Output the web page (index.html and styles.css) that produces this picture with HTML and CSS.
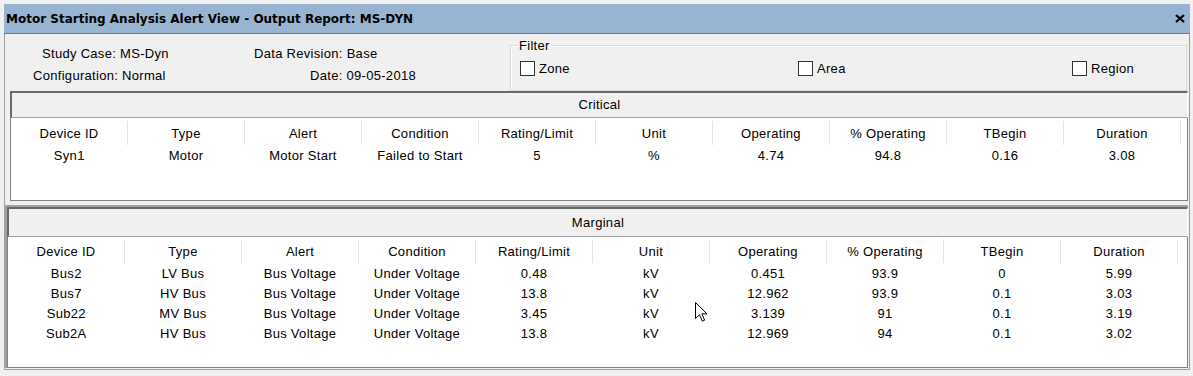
FILE: index.html
```html
<!DOCTYPE html>
<html lang="en">

<head>
  <meta charset="UTF-8">
  <title>Motor Starting Analysis Alert View</title>
  <link rel="stylesheet" href="styles.css">
</head>

<body>
  <div class="window">
    <div class="titlebar">
      <span class="title">Motor Starting Analysis Alert View - Output Report: MS-DYN</span>
      <svg class="close" width="10" height="9" viewBox="0 0 10 9">
        <path d="M1 1 L9 8 M9 1 L1 8" stroke="#000" stroke-width="2.2" fill="none" />
      </svg>
    </div>

    <div class="content">
      <div class="info">
        <div class="meta">
          <div class="metaRow">
            <span class="case">Study Case: MS-Dyn</span>
            <span>Data Revision: Base</span>
          </div>
          <div class="metaRow">
            <span class="config">Configuration: Normal</span>
            <span>Date: 09-05-2018</span>
          </div>
        </div>
        <fieldset class="filter">
          <legend>Filter</legend>
          <div class="chkRow">
            <label class="chk"><span class="box"></span>Zone</label>
            <label class="chk"><span class="box"></span>Area</label>
            <label class="chk"><span class="box"></span>Region</label>
          </div>
        </fieldset>
      </div>

      <!-- critical -->
      <div class="panel critical">
        <div class="panelHead">Critical</div>
        <div class="panelList">
          <table class="alerts">
            <tr>
              <th>Device ID</th><th>Type</th><th>Alert</th><th>Condition</th><th>Rating/Limit</th>
              <th>Unit</th><th>Operating</th><th>% Operating</th><th>TBegin</th><th>Duration</th>
            </tr>
            <tr>
              <td>Syn1</td><td>Motor</td><td>Motor Start</td><td>Failed to Start</td><td>5</td>
              <td>%</td><td>4.74</td><td>94.8</td><td>0.16</td><td>3.08</td>
            </tr>
          </table>
        </div>
      </div>

      <!-- marginal -->
      <div class="panel marginal">
        <div class="panelHead">Marginal</div>
        <div class="panelList">
          <table class="alerts">
            <tr>
              <th>Device ID</th><th>Type</th><th>Alert</th><th>Condition</th><th>Rating/Limit</th>
              <th>Unit</th><th>Operating</th><th>% Operating</th><th>TBegin</th><th>Duration</th>
            </tr>
            <tr>
              <td>Bus2</td><td>LV Bus</td><td>Bus Voltage</td><td>Under Voltage</td><td>0.48</td>
              <td>kV</td><td>0.451</td><td>93.9</td><td>0</td><td>5.99</td>
            </tr>
            <tr>
              <td>Bus7</td><td>HV Bus</td><td>Bus Voltage</td><td>Under Voltage</td><td>13.8</td>
              <td>kV</td><td>12.962</td><td>93.9</td><td>0.1</td><td>3.03</td>
            </tr>
            <tr>
              <td>Sub22</td><td>MV Bus</td><td>Bus Voltage</td><td>Under Voltage</td><td>3.45</td>
              <td>kV</td><td>3.139</td><td>91</td><td>0.1</td><td>3.19</td>
            </tr>
            <tr>
              <td>Sub2A</td><td>HV Bus</td><td>Bus Voltage</td><td>Under Voltage</td><td>13.8</td>
              <td>kV</td><td>12.969</td><td>94</td><td>0.1</td><td>3.02</td>
            </tr>
          </table>
        </div>
      </div>
    </div>
  </div>

  <svg class="cursor" width="14" height="21" viewBox="0 0 14 21">
    <path d="M0.5 0.5 L0.5 16.5 L4.5 12.8 L7.3 19.2 L9.6 18.2 L6.9 11.9 L12 11.9 Z" fill="#fff" stroke="#000" stroke-width="1" stroke-linejoin="miter" />
  </svg>
</body>

</html>
```

FILE: styles.css
```css
body {
  margin: 0;
  background-color: #f0f0f0;
  font-family: "Liberation Sans", Arial, sans-serif;
  font-size: 13px;
  letter-spacing: 0.3px;
  color: #000;
  position: relative;
  height: 376px;
  overflow: hidden;
}

.window {
  margin: 4px 0 0 4px;
  width: 1186px;
}

.titlebar {
  display: flex;
  justify-content: space-between;
  align-items: center;
  height: 27px;
  padding-top: 2px;
  background-color: #99b4d1;
  border-bottom: 1px solid #6f7a86;
}

.title {
  font-family: "DejaVu Sans", Tahoma, sans-serif;
  font-weight: bold;
  font-size: 12px;
  letter-spacing: 0;
  line-height: 27px;
  padding-left: 2px;
}

.close {
  margin-right: 5px;
  margin-top: -2px;
}

.content {
  border-left: 1px solid #a0a0a0;
  border-right: 1px solid #a0a0a0;
  border-bottom: 1px solid #a0a0a0;
  height: 335px;
}

.info {
  display: flex;
  height: 57px;
}

.meta {
  width: 505px;
  padding-top: 9px;
}

.metaRow {
  display: flex;
  line-height: 22px;
  white-space: nowrap;
}

.case {
  margin-left: 37px;
  width: 212px;
}

.config {
  margin-left: 28px;
  width: 277px;
}

.filter {
  margin: 4px 0 0 0;
  padding: 0 0 12px 9px;
  width: 666px;
  border: 1px solid #d9d9d9;
  box-shadow: inset 1px 1px #fff;
}

.filter>legend {
  margin-left: -2px;
  padding: 0 1px;
  line-height: 15px;
}

.chkRow {
  display: grid;
  grid-template-columns: 278px 274px auto;
  margin-top: 8px;
  height: 15px;
}

.chk {
  display: flex;
  align-items: center;
  line-height: 15px;
}

.chk>.box {
  width: 13px;
  height: 13px;
  border: 1px solid #333;
  background-color: #fff;
  margin-right: 4px;
}

.panel {
  width: 1178px;
}

.critical {
  margin-left: 5px;
}

.marginal {
  margin-top: 4px;
  width: 1181px;
  border-top: 2px solid #a0a0a0;
  border-left: 2px solid #a0a0a0;
}

.panelHead {
  height: 24px;
  line-height: 24px;
  text-align: center;
  border-top: 2px solid #696969;
  border-left: 2px solid #696969;
  border-right: 1px solid #fcfcfc;
  border-bottom: 1px solid #a0a0a0;
}

.marginal>.panelHead {
  height: 27px;
  line-height: 27px;
}

.panelList {
  background-color: #fff;
  border: 1px solid #828282;
  border-top: none;
  padding-top: 3px;
  height: 79px;
}

.marginal>.panelList {
  padding-top: 2px;
  height: 128px;
}

.alerts {
  table-layout: fixed;
  border-collapse: collapse;
  width: 1170px;
}

.alerts th {
  width: 116px;
  height: 24px;
  padding: 0;
  font-weight: normal;
  text-align: center;
  border-right: 1px solid #e5e5e5;
}

.alerts td {
  height: 20px;
  padding: 0;
  text-align: center;
  white-space: nowrap;
}

.cursor {
  position: absolute;
  left: 695px;
  top: 302px;
}
```
